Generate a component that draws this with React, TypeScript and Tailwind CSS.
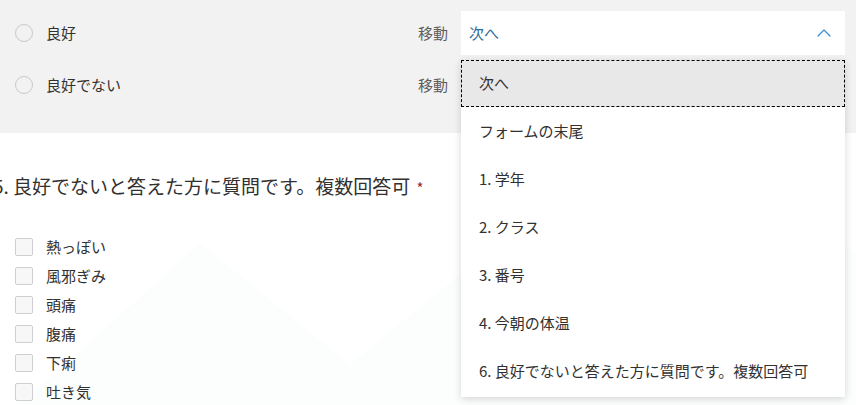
import { ChevronUp } from 'lucide-react'

const symptoms = ['熱っぽい', '風邪ぎみ', '頭痛', '腹痛', '下痢', '吐き気']

const targets = [
  'フォームの末尾',
  '1. 学年',
  '2. クラス',
  '3. 番号',
  '4. 今朝の体温',
  '6. 良好でないと答えた方に質問です。複数回答可',
]

function Radio() {
  return <span className="w-[18px] h-[18px] rounded-full border border-[#c8c8c8] shrink-0" />
}

function Checkbox() {
  return <span className="w-[18px] h-[18px] rounded-[2px] border border-[#cfcfcf] bg-[#f7f7f7] shrink-0" />
}

export default function App() {
  return (
    <div
      className="relative w-[856px] h-[405px] overflow-hidden bg-white text-[#323130]"
      style={{ fontFamily: '"Noto Sans CJK JP", "Noto Sans", sans-serif' }}
    >
      {/* faint background hills */}
      <svg className="absolute left-0 top-[133px]" width="856" height="272" viewBox="0 0 856 272">
        <polygon points="20,272 200,110 400,272" fill="#fcfdfd" />
        <polygon points="300,272 560,60 700,0 856,120 856,272" fill="#fcfdfd" />
      </svg>

      <div className="relative h-[133px] bg-[#f2f2f2] pt-[11px] flex flex-col gap-[8px]">
        <div className="flex items-center h-[44px]">
          <div className="ml-[15px] flex items-center gap-[13px] text-[15px]">
            <Radio />
            <span>良好</span>
          </div>
          <span className="ml-auto mr-[13px] text-[15px] text-[#605e5c]">移動</span>
          <div className="w-[384px] h-[44px] mr-[11px] bg-white flex items-center pl-[8px] pr-[9px]">
            <span className="text-[15px] text-[#2f6c98]">次へ</span>
            <ChevronUp className="ml-auto text-[#3a8fd2]" size={24} strokeWidth={1.3} />
          </div>
        </div>
        <div className="flex items-center h-[44px]">
          <div className="ml-[15px] flex items-center gap-[13px] text-[15px]">
            <Radio />
            <span>良好でない</span>
          </div>
          <span className="ml-auto mr-[408px] text-[15px] text-[#605e5c]">移動</span>
        </div>
      </div>

      <div className="relative pt-[38px]">
        <div className="ml-[-7px] text-[19px] leading-[30px]">
          5. 良好でないと答えた方に質問です。複数回答可{' '}
          <span className="ml-[2px] text-[#a4262c] text-[15px]">*</span>
        </div>
        <div className="mt-[35px] ml-[15px] flex flex-col gap-[11px]">
          {symptoms.map((s) => (
            <div key={s} className="flex items-center gap-[13px] h-[18px] text-[15px]">
              <Checkbox />
              <span>{s}</span>
            </div>
          ))}
        </div>
      </div>

      {/* open dropdown */}
      <div className="absolute left-[461px] top-[60px] w-[384px] bg-white shadow-[0_2px_8px_rgba(0,0,0,0.16)] pb-[2px]">
        <div className="h-[47px] bg-[#e8e8e8] border border-dashed border-black flex items-center pl-[17px] text-[15px]">
          次へ
        </div>
        {targets.map((t) => (
          <div key={t} className="h-[48px] flex items-center pl-[18px] text-[15px]">
            {t}
          </div>
        ))}
      </div>
    </div>
  )
}
